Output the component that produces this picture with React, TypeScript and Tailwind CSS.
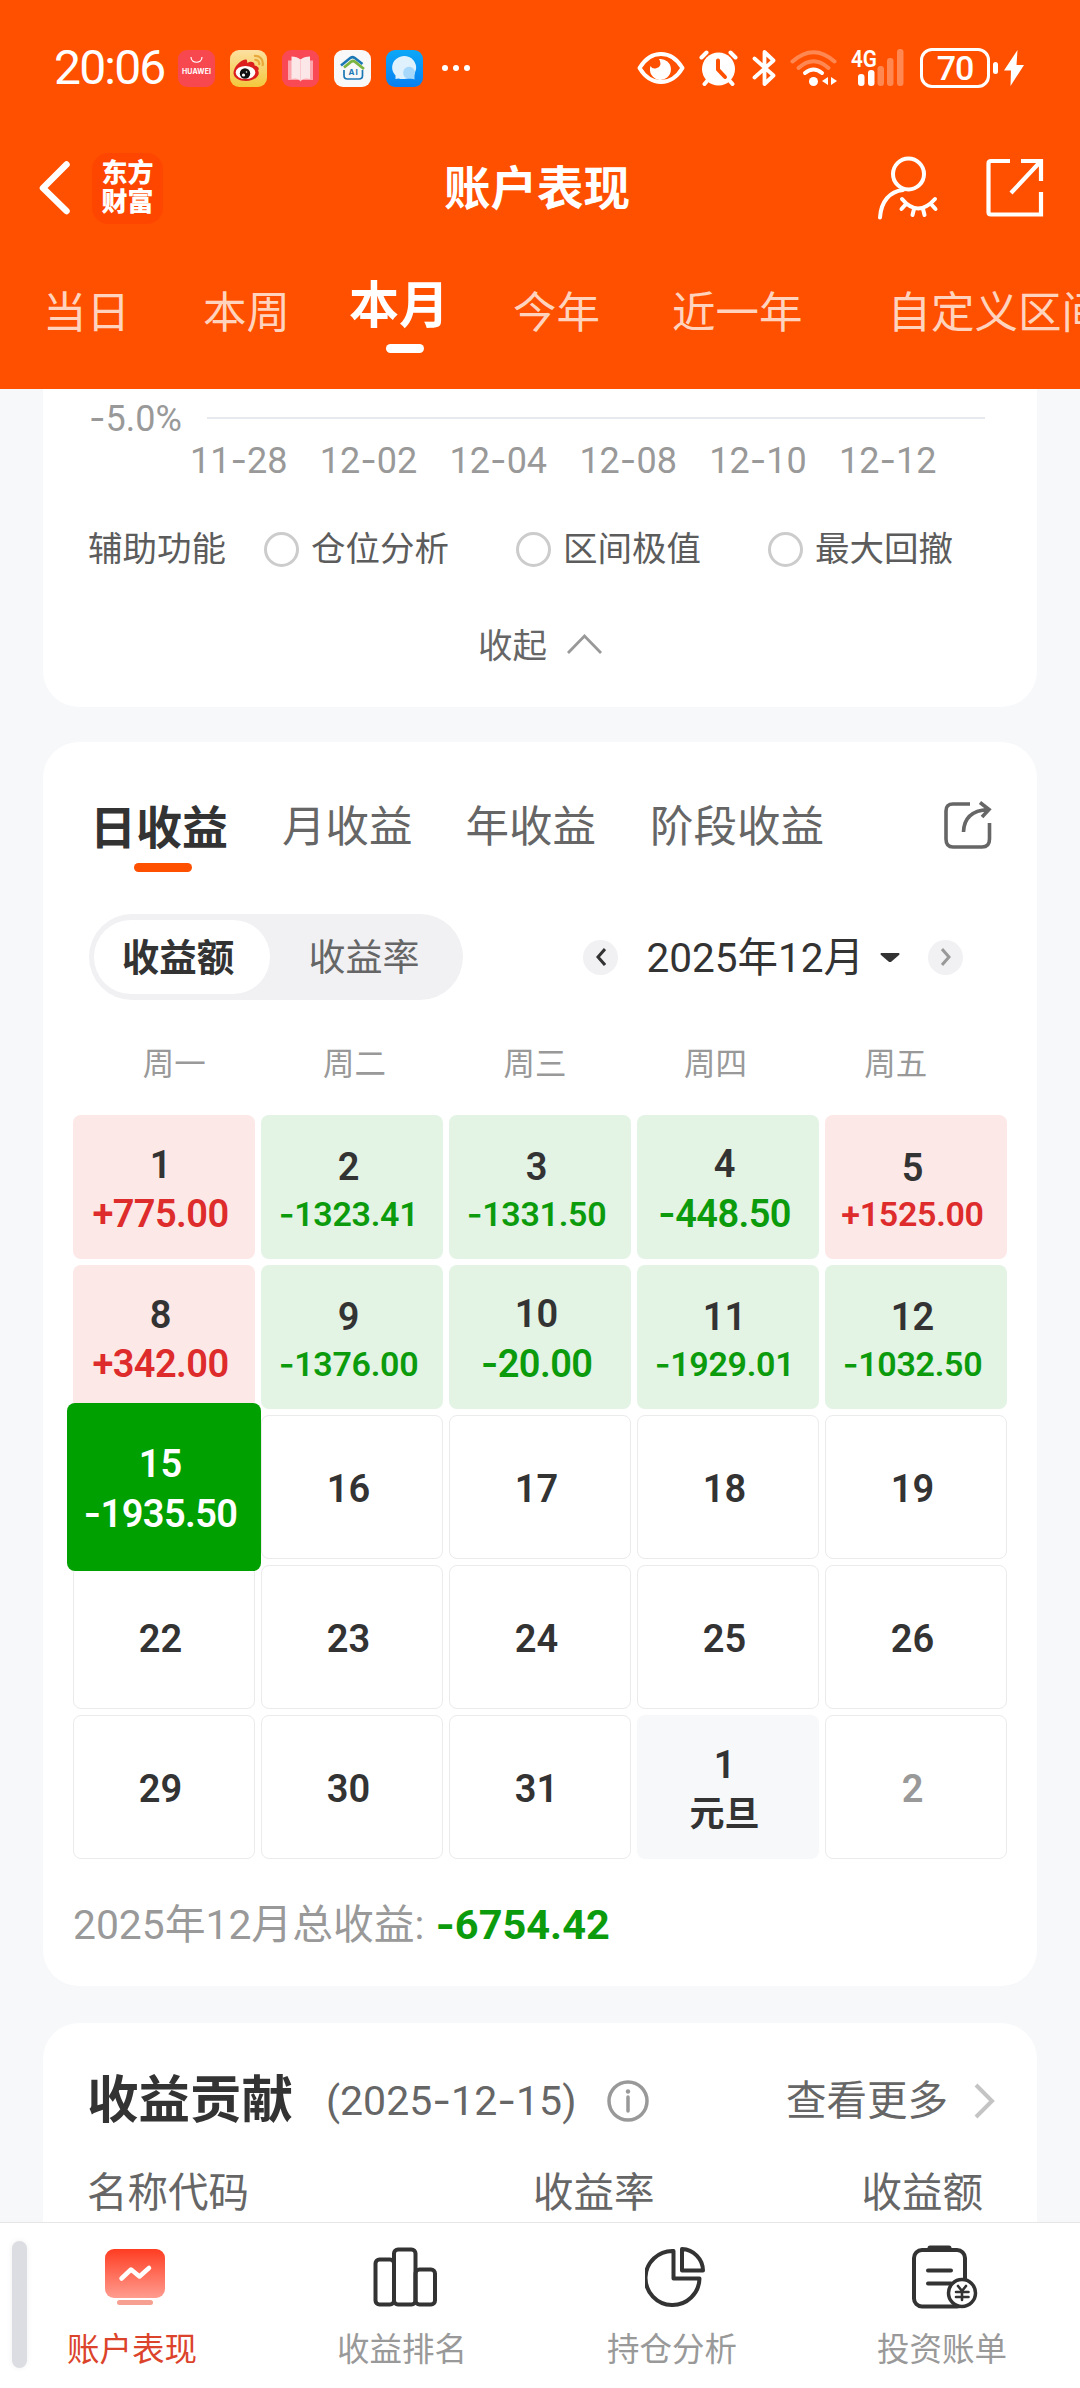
import { Fragment, type ReactNode } from "react";
import clsx from "clsx";

// hyphens use Inter, whose dash is wider than Roboto's
function Num({ children }: { children: string }) {
  return (
    <>
      {children.split("-").map((part, i) => (
        <Fragment key={i}>
          {i > 0 && <span className="font-[Inter]">-</span>}
          {part}
        </Fragment>
      ))}
    </>
  );
}

function AppIcons() {
  return (
    <div className="flex items-center gap-[15px]">
      <svg width="37" height="37" viewBox="0 0 37 37">
        <rect width="37" height="37" rx="9" fill="#f8484f" />
        <path d="M13 7c0 7 11 7 11 0" fill="none" stroke="#fff" strokeWidth="1.2" />
        <text x="18.5" y="24" textAnchor="middle" fontSize="7" fontWeight="700" fill="#fff" fontFamily="Inter" textLength="29">
          HUAWEI
        </text>
      </svg>
      <svg width="37" height="37" viewBox="0 0 37 37">
        <defs>
          <linearGradient id="weibo" x1="0" y1="0" x2="0" y2="1">
            <stop offset="0" stopColor="#fce0a0" />
            <stop offset="1" stopColor="#f3c83c" />
          </linearGradient>
        </defs>
        <rect width="37" height="37" rx="9" fill="url(#weibo)" />
        <path
          d="M3.500 22.500C4 17 10 10 15.500 9.500C17.500 9 17 12 17.500 13C20 11 25 11.500 24.500 15.500C29 16.500 29.500 19 28 20.500C31 25 25 31 16 31C9 31 3.500 28 3.500 22.500Z"
          fill="#dc1e1e"
        />
        <ellipse cx="15.500" cy="22.500" rx="9.800" ry="6.600" fill="#fff" />
        <circle cx="15" cy="23.500" r="5.200" fill="#111" />
        <circle cx="13.500" cy="25" r="1.600" fill="#fff" />
        <circle cx="16.500" cy="22" r=".8" fill="#fff" />
        <g fill="none" stroke="#e8a83a" strokeWidth="2.200">
          <path d="M24 6C30 5 34 10 32.500 16" />
          <path d="M24.500 10C28 9.500 30 12 29 15" />
        </g>
      </svg>
      <svg width="37" height="37" viewBox="0 0 37 37">
        <rect width="37" height="37" rx="9" fill="#f84955" />
        <path d="M6 10.500H31V30H20L18.500 31.500L17 30H6Z" fill="#fba7ad" />
        <path d="M9.500 6.500Q15 6.500 18.500 9.500Q22 6.500 28 6.500V29Q22 27.500 18.500 30.500Q15 27.500 9.500 29Z" fill="#fbe6e8" />
        <path d="M18.500 9.500V30.500" stroke="#f8c9cd" />
      </svg>
      <svg width="37" height="37" viewBox="0 0 37 37">
        <rect width="37" height="37" rx="9" fill="#f8f8f8" />
        <path d="M7 15.500L16.500 7.800Q18.500 6.500 20.500 7.800L28.500 14" fill="none" stroke="#1c78b5" strokeWidth="2.600" />
        <path d="M10 17.500L17.500 11.500Q19 10.500 20.500 11.500L30 19" fill="none" stroke="#7cb441" strokeWidth="2.800" />
        <path d="M10 20V25.500Q10 29 13.500 29H25Q28.500 29 28.500 25.500V20" fill="none" stroke="#1c78b5" strokeWidth="1.700" />
        <text x="19.700" y="25.300" textAnchor="middle" fontSize="8" fontWeight="700" fill="#1c78b5" fontFamily="Inter" letterSpacing="1">
          AI
        </text>
      </svg>
      <svg width="37" height="37" viewBox="0 0 37 37">
        <defs>
          <linearGradient id="msg" x1="0" y1="0" x2="0" y2="1">
            <stop offset="0" stopColor="#0ca8f8" />
            <stop offset="1" stopColor="#087ff0" />
          </linearGradient>
        </defs>
        <rect width="37" height="37" rx="9" fill="url(#msg)" />
        <path d="M9.500 29V25.500A12 11.500 0 1 1 17.500 29Q14 29 12.500 28.500Z" fill="#def1fc" />
        <path d="M28.500 28.500V25.500A6 6 0 1 0 23.500 28.800Q27 28.500 28.500 29.500Z" fill="#a5d8fb" />
      </svg>
    </div>
  );
}

function StatusIcons() {
  return (
    <div className="flex items-center text-white">
      <svg width="48" height="34" viewBox="0 0 48 34" fill="none" stroke="currentColor">
        <path d="M2.500 17Q11 3 24 3T45.500 17Q37 31 24 31T2.500 17Z" strokeWidth="4" strokeLinejoin="round" />
        <path d="M22 8A10.500 10.500 0 1 1 13.500 15Q15 18 18.500 17.500Q23 16.500 23.500 13Q23.500 10 22 8Z" fill="currentColor" stroke="none" />
      </svg>
      <svg className="ml-3.5" width="39" height="36" viewBox="0 0 39 36">
        <circle cx="19.500" cy="19" r="16.500" fill="currentColor" />
        <g stroke="currentColor" strokeWidth="4" strokeLinecap="round">
          <path d="M2.500 7.500L7.500 2.500M36.500 7.500L31.500 2.500M5.500 34L9 30M33.500 34L30 30" />
        </g>
        <path d="M19 10.500V19.500L26 27" fill="none" stroke="#ff5000" strokeWidth="4" strokeLinecap="round" />
      </svg>
      <svg className="ml-3.5" width="24" height="36" viewBox="0 0 24 36" fill="none" stroke="currentColor" strokeWidth="3.800" strokeLinejoin="round" strokeLinecap="round">
        <path d="M2.500 8.500L21.500 25.500L12.500 34V2L21.500 10.500L2.500 27.500" />
      </svg>
      <svg className="ml-3.5" width="48" height="36" viewBox="0 0 48 36" fill="none" stroke="currentColor" strokeLinecap="round">
        <g strokeWidth="4">
          <path d="M2.500 11.500Q23.500 -7 44.500 11.500" opacity=".32" />
          <path d="M8.500 18Q23.500 4.500 38.500 18" opacity=".32" />
          <path d="M15 23Q23.500 16 32 23" />
        </g>
        <circle cx="23.500" cy="31.500" r="4.500" fill="currentColor" stroke="none" />
        <path d="M38 27V35L32 31ZM41 27V35L47 31Z" fill="currentColor" stroke="none" />
      </svg>
      <svg className="ml-3 overflow-visible" width="56" height="46" viewBox="0 -4 56 46" fill="currentColor">
        <text x="1" y="18" fontSize="24" fontWeight="600" fontFamily="Roboto" textLength="26" lengthAdjust="spacingAndGlyphs">
          4G
        </text>
        <rect x="8" y="25" width="6.500" height="12" rx="3" />
        <rect x="18" y="21" width="6.500" height="16" rx="3" />
        <g opacity=".32">
          <rect x="27.500" y="17" width="6.500" height="20" rx="3" />
          <rect x="37" y="9" width="6.500" height="28" rx="3" />
          <rect x="47" y="0" width="6.500" height="37" rx="3" />
        </g>
      </svg>
      <div className="ml-[14px] flex h-10 w-[70px] items-center justify-center rounded-xl border-[3px] border-white text-[34px] font-medium leading-none tracking-[-1px]">
        70
      </div>
      <div className="ml-[3px] h-3 w-[5px] rounded-full bg-white" />
      <svg className="ml-1.5" width="20" height="36" viewBox="0 0 20 36" fill="currentColor">
        <path d="M13.500 0L0 20.500H7L6.500 36L20 15H12.500Z" />
      </svg>
    </div>
  );
}

const ranges = [
  { label: "当日", className: "" },
  { label: "本周", className: "ml-[73px]" },
  { label: "本月", className: "ml-[59px]", active: true },
  { label: "今年", className: "ml-[64px]" },
  { label: "近一年", className: "ml-[72px]" },
  { label: "自定义区间", className: "ml-[85px]" },
];

function Header() {
  return (
    <header className="h-[389px] overflow-hidden bg-[#ff5000] text-white">
      <div className="flex h-[136px] items-center pl-[54px] pr-14">
        <span className="w-[124px] text-[48px] leading-none tracking-[-1.800px]">20:06</span>
        <AppIcons />
        <div className="ml-[19px] flex gap-[5px]">
          <i className="h-[6px] w-[6px] rounded-full bg-white" />
          <i className="h-[6px] w-[6px] rounded-full bg-white" />
          <i className="h-[6px] w-[6px] rounded-full bg-white" />
        </div>
        <div className="ml-auto">
          <StatusIcons />
        </div>
      </div>

      <div className="grid h-[104px] grid-cols-[1fr_auto_1fr] items-center pl-[37px] pr-[36px]">
        <div className="flex items-center pl-0.5">
          <svg width="32" height="54" viewBox="0 0 32 54" fill="none" stroke="currentColor" strokeWidth="6.500" strokeLinecap="round" strokeLinejoin="round">
            <path d="M27.500 3.500L4 27L27.500 50" />
          </svg>
          <div className="ml-[21px] flex h-[71px] w-[71px] flex-col items-center justify-center rounded-2xl bg-[#ff4600] text-[26px] font-black leading-[29px]">
            <span>东方</span>
            <span>财富</span>
          </div>
        </div>
        <h1 className="pr-[7px] pt-0.5 text-[46.500px] font-bold leading-none">账户表现</h1>
        <div className="flex items-center justify-end gap-[47px]">
          <svg width="62" height="64" viewBox="0 0 62 64" fill="none" stroke="currentColor" strokeWidth="4" strokeLinecap="round">
            <circle cx="31.500" cy="18" r="15.500" />
            <path d="M3 61.500C4 45 13 35.500 26 34" />
            <path d="M25 43Q41 62 58 43M24.500 53L29 48M35.500 59L37 53M47.500 59L46 53M58.500 53L54 48" />
          </svg>
          <svg width="58" height="60" viewBox="0 0 58 60" fill="none" stroke="currentColor" strokeWidth="4.200">
            <path d="M24 3H5Q2.500 3 2.500 5.500V54Q2.500 56.500 5 56.500H55V34" />
            <path d="M35 3H55V23M54 4L25 35" />
          </svg>
        </div>
      </div>

      <nav className="flex h-[120px] items-start whitespace-nowrap pl-[43px]">
        {ranges.map((r) =>
          r.active ? (
            <div key={r.label} className={clsx("flex shrink-0 flex-col items-center pt-[39px]", r.className)}>
              <span className="text-[50px] font-bold leading-[54px]">{r.label}</span>
              <i className="ml-3 mt-[11px] h-[9px] w-[38px] rounded-full bg-white" />
            </div>
          ) : (
            <span key={r.label} className={clsx("shrink-0 pt-[47px] text-[43.500px] leading-[54px] text-[#ffd3bd]", r.className)}>
              {r.label}
            </span>
          )
        )}
      </nav>
    </header>
  );
}

function ChartFooter() {
  return (
    <section className="mx-[43px] h-[318px] rounded-b-[36px] bg-white">
      <div className="flex h-[58px] items-center pl-[46px] pr-[52px] text-[36px] text-[#999]">
        <span className="w-[118px] leading-none">
          <Num>-5.0%</Num>
        </span>
        <div className="h-0.5 flex-1 bg-[#e6eaef]" />
      </div>
      <div className="flex pl-[147px] text-[36px] leading-[26px] text-[#999]">
        {["11-28", "12-02", "12-04", "12-08", "12-10", "12-12"].map((d) => (
          <span key={d} className="w-[129.800px]">
            <Num>{d}</Num>
          </span>
        ))}
      </div>
      <div className="mt-[55px] flex h-[42px] items-center pl-[45px] text-[34.500px] text-[#5c5c5c]">
        <span className="w-[176px]">辅助功能</span>
        {["仓位分析", "区间极值", "最大回撤"].map((label) => (
          <label key={label} className="flex w-[252px] items-center gap-3">
            <i className="-mt-0.5 h-[35px] w-[35px] rounded-full border-[3px] border-[#ccc]" />
            {label}
          </label>
        ))}
      </div>
      <div className="mt-[55px] flex h-[42px] items-center justify-center gap-5 text-[34.500px] text-[#666]">
        收起
        <svg className="-mt-1.5" width="35" height="20" viewBox="0 0 35 20" fill="none" stroke="#999" strokeWidth="2.800">
          <path d="M1 19L17.500 2L34 19" />
        </svg>
      </div>
    </section>
  );
}

type Day = {
  date: string;
  amount?: string;
  note?: string;
  selected?: boolean;
  muted?: boolean;
};

const days: Day[] = [
  { date: "1", amount: "+775.00" },
  { date: "2", amount: "-1323.41" },
  { date: "3", amount: "-1331.50" },
  { date: "4", amount: "-448.50" },
  { date: "5", amount: "+1525.00" },
  { date: "8", amount: "+342.00" },
  { date: "9", amount: "-1376.00" },
  { date: "10", amount: "-20.00" },
  { date: "11", amount: "-1929.01" },
  { date: "12", amount: "-1032.50" },
  { date: "15", amount: "-1935.50", selected: true },
  { date: "16" },
  { date: "17" },
  { date: "18" },
  { date: "19" },
  { date: "22" },
  { date: "23" },
  { date: "24" },
  { date: "25" },
  { date: "26" },
  { date: "29" },
  { date: "30" },
  { date: "31" },
  { date: "1", note: "元旦" },
  { date: "2", muted: true },
];

function DayCell({ day }: { day: Day }) {
  const gain = day.amount?.startsWith("+");
  const small = !day.selected && (day.amount?.length ?? 0) > 7;
  return (
    <div
      className={clsx(
        "flex flex-col items-center justify-center rounded-lg pr-[7px] pt-[5px] text-[38px] font-semibold leading-[49px]",
        day.selected && "relative z-10 -mx-1.5 -my-3 bg-[#00a000] text-white",
        !day.selected && day.amount && (gain ? "bg-[#fce8e7]" : "bg-[#e3f4e5]"),
        day.note && "bg-[#f7f8fa]",
        !day.amount && !day.note && "border border-[#ebebeb]",
        !day.selected && (day.muted ? "text-[#999]" : "text-[#333]")
      )}
    >
      <span>{day.date}</span>
      {day.amount && (
        <span
          className={clsx(
            small ? "text-[34px] leading-[43px] tracking-[-0.300px]" : "tracking-[-0.600px]",
            !day.selected && (gain ? "text-[#de2b2b]" : "text-[#0c9b0c]")
          )}
        >
          <Num>{day.amount}</Num>
        </span>
      )}
      {day.note && <span className="text-[35px] font-bold">{day.note}</span>}
    </div>
  );
}

function RoundArrow({ next }: { next?: boolean }) {
  return (
    <span className="flex h-[35px] w-[35px] items-center justify-center rounded-full bg-[#f1f1f4]">
      <svg width="10" height="18" viewBox="0 0 10 18" fill="none" stroke={next ? "#999" : "#333"} strokeWidth="3">
        <path d={next ? "M1 1L8 9L1 17" : "M9 1L2 9L9 17"} />
      </svg>
    </span>
  );
}

function CalendarCard() {
  return (
    <section className="mx-[43px] mt-[35px] h-[1244px] rounded-[36px] bg-white">
      <div className="flex h-[172px] items-start pl-[47px] pr-[45px] pt-[59px] text-[43.500px] leading-[54px] text-[#666]">
        <div className="flex flex-col items-center">
          <span className="text-[46px] font-bold text-[#333]">日收益</span>
          <i className="ml-2 mt-[8px] h-[9px] w-[58px] rounded-full bg-[#ff5000]" />
        </div>
        <span className="ml-[54px]">月收益</span>
        <span className="ml-[53px]">年收益</span>
        <span className="ml-[54px]">阶段收益</span>
        <svg className="ml-auto" width="48" height="48" viewBox="0 0 48 48" fill="none" stroke="#666" strokeWidth="3.600">
          <path d="M26 3H9Q2 3 2 10V38Q2 46 9 46H38Q45.500 46 45.500 38V22" />
          <path d="M19.500 31Q20 10 44 8.500M36 1.500L45 8.500L38 16" />
        </svg>
      </div>

      <div className="flex h-[86px] items-center pl-[46px] pr-[74px]">
        <div className="flex h-[86px] w-[374px] items-center rounded-full bg-[#f1f1f4] px-[5px] text-[37.500px]">
          <span className="flex h-[74px] w-[176px] items-center justify-center rounded-full bg-white pr-2 pt-0.5 font-bold text-[#333]">
            收益额
          </span>
          <span className="flex-1 pt-[3px] text-center text-[37px] text-[#666]">收益率</span>
        </div>
        <div className="ml-auto flex items-center text-[#333]">
          <RoundArrow />
          <span className="ml-[28px] pt-[3px] text-[40.500px] leading-none">2025年12月</span>
          <svg className="ml-[16px] mr-[28px]" width="20" height="9" viewBox="0 0 20 9" fill="#333">
            <path d="M1 0H19Q20 1 19 2L11.500 8.500Q10 9.500 8.500 8.500L1 2Q0 1 1 0Z" />
          </svg>
          <RoundArrow next />
        </div>
      </div>

      <div className="grid h-[115px] grid-cols-5 pl-[41px] pr-[51px] pt-[44px] text-center text-[31.500px] leading-[42px] text-[#999]">
        {["周一", "周二", "周三", "周四", "周五"].map((w) => (
          <span key={w}>{w}</span>
        ))}
      </div>

      <div className="mx-[30px] grid auto-rows-[144px] grid-cols-5 gap-1.5">
        {days.map((day, i) => (
          <DayCell key={i} day={day} />
        ))}
      </div>

      <p className="mt-[39px] flex items-center pl-[30px] text-[40.800px] leading-[52px] text-[#999]">
        2025年12月总收益:
        <span className="ml-[11px] text-[41.500px] font-bold text-[#0c9b0c]">
          <Num>-6754.42</Num>
        </span>
      </p>
    </section>
  );
}

function ContributionCard() {
  return (
    <section className="mx-[43px] mt-[37px] h-[199px] overflow-hidden rounded-t-[36px] bg-white px-[44px] text-[40.500px] text-[#666]">
      <div className="mt-[48px] flex h-[60px] items-center leading-none">
        <h2 className="text-[51.500px] font-bold text-[#333]">收益贡献</h2>
        <span className="ml-[33px] text-[41px]">
          <Num>(2025-12-15)</Num>
        </span>
        <svg className="ml-[31px]" width="42" height="42" viewBox="0 0 42 42" fill="none" stroke="#999" strokeWidth="3.500">
          <circle cx="21" cy="21" r="19" />
          <path d="M21 17V31" strokeLinecap="round" />
          <circle cx="21" cy="11.500" r="2.200" fill="#999" stroke="none" />
        </svg>
        <span className="ml-auto">查看更多</span>
        <svg className="ml-[25px] -mr-[3px]" width="23" height="36" viewBox="0 0 23 36" fill="none" stroke="#c4c4c4" strokeWidth="4">
          <path d="M3 2L19 18L3 34" />
        </svg>
      </div>
      <div className="mt-[34px] grid grid-cols-[446px_1fr_auto] pr-[10px] text-[40.500px] leading-[56px]">
        <span>名称代码</span>
        <span>收益率</span>
        <span>收益额</span>
      </div>
    </section>
  );
}

function NavItem({ label, active, children }: { label: string; active?: boolean; children: ReactNode }) {
  return (
    <div className="flex flex-1 flex-col items-center pt-[22px]">
      <div className="flex h-[64px] items-center">{children}</div>
      <span className={clsx("mt-[20px] pr-1.5 text-[32.500px] leading-[42px]", active ? "text-[#dc432b]" : "text-[#999]")}>
        {label}
      </span>
    </div>
  );
}

function BottomNav() {
  return (
    <nav className="relative flex h-[166px] border-t border-[#e6e6e6] bg-white">
      <i className="absolute left-3 top-[18px] h-[127px] w-[15px] rounded-full bg-[#dcdde2] shadow-[0_0_6px_#f0f0f0]" />
      <NavItem label="账户表现" active>
        <svg width="60" height="58" viewBox="0 0 60 58">
          <defs>
            <linearGradient id="nav" x1="0" y1="0" x2="0" y2="1">
              <stop offset="0" stopColor="#ff3d22" />
              <stop offset="1" stopColor="#ff9c8f" />
            </linearGradient>
          </defs>
          <rect y="1" width="60" height="49" rx="9" fill="url(#nav)" />
          <path d="M16.500 30.500L26 21.500L34.500 28.500L44 20" fill="none" stroke="#fff" strokeWidth="4.500" strokeLinecap="round" strokeLinejoin="round" />
          <rect x="12" y="52" width="36" height="5" rx="2.500" fill="#f6a092" />
        </svg>
      </NavItem>
      <NavItem label="收益排名">
        <svg width="64" height="60" viewBox="0 0 64 60" fill="none" stroke="#333" strokeWidth="4">
          <rect x="2.500" y="12.500" width="18.500" height="45" rx="4" />
          <rect x="21" y="2.500" width="21.500" height="55" rx="4" />
          <rect x="42.500" y="22.500" width="19.500" height="35" rx="4" />
        </svg>
      </NavItem>
      <NavItem label="持仓分析">
        <svg width="60" height="62" viewBox="0 0 60 62" fill="none" stroke="#333" strokeWidth="4" strokeLinejoin="round">
          <path d="M28.500 5A27 27 0 1 0 54.500 32.500H28.500Z" />
          <path d="M37 3V24.500H58A22 22 0 0 0 37 3Z" />
        </svg>
      </NavItem>
      <NavItem label="投资账单">
        <svg width="66" height="64" viewBox="0 0 66 64" fill="none" stroke="#333" strokeWidth="4" strokeLinecap="round">
          <rect x="2" y="5" width="51" height="56.500" rx="8" />
          <path d="M18 3H37" strokeWidth="5" />
          <path d="M16 25.500H39M16 38.500H39" />
          <circle cx="50" cy="48" r="13.500" fill="#fff" strokeWidth="3.500" />
          <path d="M46 41L50 46L54 41M50 46V55M44 47H56.500M44 52H56.500" strokeWidth="2.600" />
        </svg>
      </NavItem>
    </nav>
  );
}

export default function App() {
  return (
    <div className="h-[2388px] w-[1080px] overflow-hidden bg-[#f7f8fa] font-['Roboto','Noto_Sans_CJK_SC',sans-serif]">
      <Header />
      <ChartFooter />
      <CalendarCard />
      <ContributionCard />
      <BottomNav />
    </div>
  );
}
